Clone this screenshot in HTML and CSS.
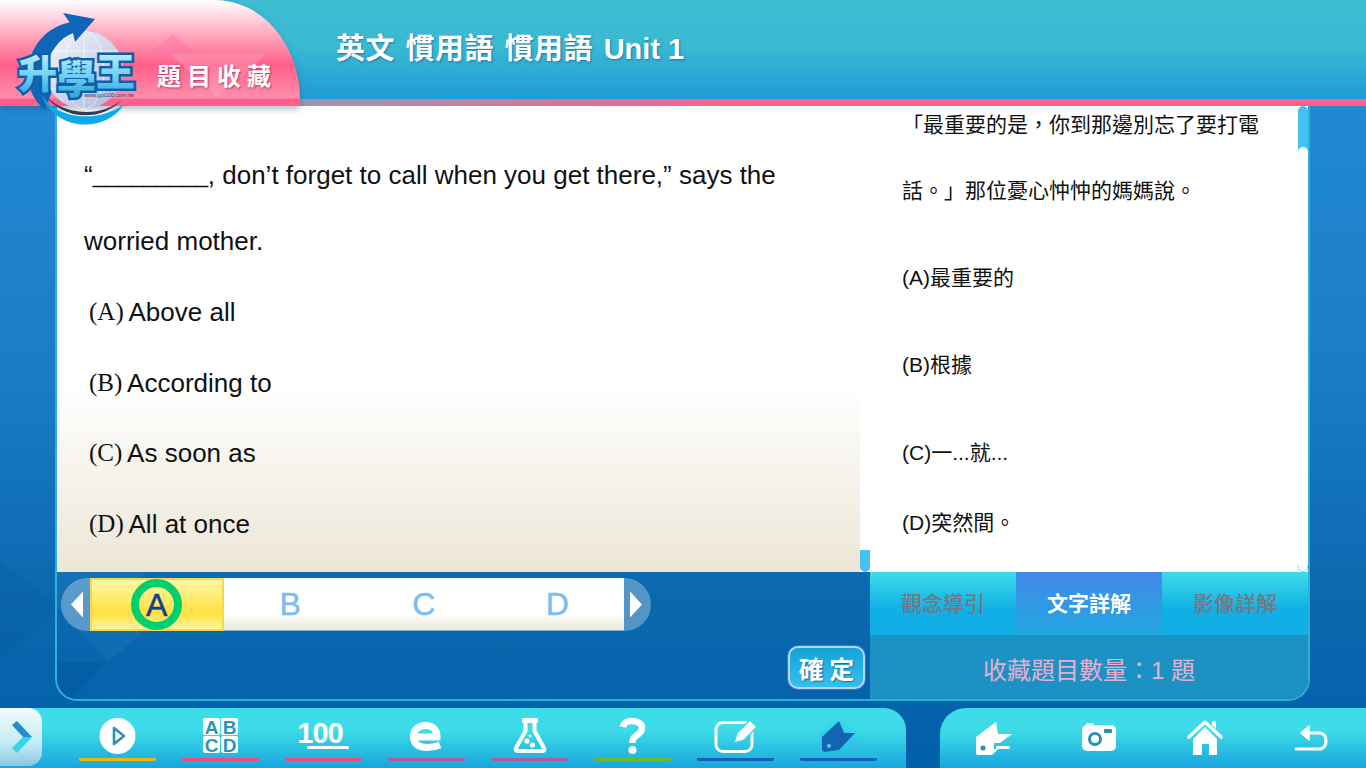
FILE: index.html
```html
<!DOCTYPE html>
<html lang="zh-Hant">
<head>
<meta charset="utf-8">
<title>升學王 題目收藏</title>
<link rel="stylesheet" href="styles.css">
</head>
<body>
<div class="app">
  <header class="top">
    <div class="tab">
      <i class="tab-deco-a"></i><i class="tab-deco-b"></i>
      <span class="tab-label">題目收藏</span>
    </div>
    <h1 class="title">英文 慣用語 慣用語 <span class="title-latin">Unit 1</span></h1>
  </header>

  <div class="logo">
    <svg class="logo-art" viewBox="0 0 140 130" width="140" height="130" role="img" aria-label="升學王">
      <defs>
        <linearGradient id="glb" x1="0" y1="0" x2="1" y2="1"><stop offset="0" stop-color="#f6f8fc"/><stop offset="1" stop-color="#a9b8da"/></linearGradient>
        <linearGradient id="nm" x1="0" y1="0" x2="0" y2="1"><stop offset="0" stop-color="#eafaff"/><stop offset=".55" stop-color="#6fd0f2"/><stop offset="1" stop-color="#1c96d8"/></linearGradient>
      </defs>
      <path d="M72 22C46 26 28 48 28 74 28 90 35 102 45 110L60 70 78 34Z" fill="#0f66b8"/>
      <circle cx="84" cy="70" r="39" fill="url(#glb)"/>
      <g fill="none" stroke="#fff" stroke-width=".7" opacity=".85">
        <ellipse cx="84" cy="70" rx="20" ry="39"/><path d="M45 70h78M50 51h68M50 89h68M84 31v78"/>
      </g>
      <path d="M63 13 95 19 75 42 73 33C60 38 50 50 44 72L33 60C38 42 50 28 70 23Z" fill="#0f66b8"/>
      <path d="M41 94C55 119 98 124 124 104 108 132 56 134 41 94Z" fill="#0fa8e8"/>
      <path d="M43 92C56 113 98 120 122 100 100 123 60 120 43 92Z" fill="#363c52"/>
      <text class="logo-name" fill="url(#nm)" stroke="#0d5fa9" stroke-width="5" paint-order="stroke"><tspan x="18" y="88">升</tspan><tspan x="57" y="93">學</tspan><tspan x="96" y="86">王</tspan></text>
      <text class="logo-url" x="84" y="97">www.got100.com.tw</text>
    </svg>
  </div>

  <main class="stage">
    <section class="panel">
      <div class="content">
        <div class="question">
          <p class="q-text">“<span class="blank">_________</span>, don’t forget to call when you get there,” says the worried mother.</p>
          <p class="opt"><span class="opt-key">(A)</span> Above all</p>
          <p class="opt"><span class="opt-key">(B)</span> According to</p>
          <p class="opt"><span class="opt-key">(C)</span> As soon as</p>
          <p class="opt"><span class="opt-key">(D)</span> All at once</p>
        </div>
        <div class="track-left"><i class="thumb-left"></i></div>
        <div class="explain">
          <div class="explain-text">
            <p class="ex">「最重要的是，你到那邊別忘了要打電話。」那位憂心忡忡的媽媽說。</p>
            <p class="ex gap">(A)最重要的</p>
            <p class="ex gap">(B)根據</p>
            <p class="ex gap-wide">(C)一...就...</p>
            <p class="ex gap-small">(D)突然間。</p>
          </div>
          <div class="track-right"><i class="thumb-right"></i></div>
        </div>
      </div>
      <div class="lower">
        <div class="answers">
          <div class="picker">
            <button class="cap cap-l" type="button"><i class="tri tri-l"></i></button>
            <div class="choices">
              <span class="choice selected"><b class="ring">A</b></span>
              <span class="choice">B</span>
              <span class="choice">C</span>
              <span class="choice">D</span>
            </div>
            <button class="cap cap-r" type="button"><i class="tri tri-r"></i></button>
          </div>
          <button class="confirm" type="button">確 定</button>
        </div>
        <div class="side">
          <nav class="tabs">
            <span class="side-tab">觀念導引</span>
            <span class="side-tab active">文字詳解</span>
            <span class="side-tab">影像詳解</span>
          </nav>
          <div class="count">收藏題目數量：1 題</div>
        </div>
      </div>
    </section>
  </main>

  <footer class="bottom">
    <nav class="bar bar-left">
      <span class="toggle">
        <svg viewBox="0 0 24 34" width="24" height="34" aria-hidden="true"><path d="M3 5 8 1 23 17 14 17Z" fill="#1d8fd6"/><path d="M23 17 8 33 3 28 14 17Z" fill="#38d4e8"/></svg>
      </span>
      <div class="tool tool-yellow">
        <svg viewBox="0 0 77 46" aria-hidden="true"><circle cx="38.500" cy="24" r="18" fill="#fff"/><path d="M35 16 45 24 35 32Z" fill="#fff" stroke="#2a90b8" stroke-width="2.600" stroke-linejoin="round"/></svg>
      </div>
      <div class="tool tool-pink">
        <svg viewBox="0 0 77 46" aria-hidden="true">
          <g fill="#fff"><rect x="21" y="6" width="17" height="17" rx="2"/><rect x="39" y="6" width="17" height="17" rx="2"/><rect x="21" y="24" width="17" height="17" rx="2"/><rect x="39" y="24" width="17" height="17" rx="2"/></g>
          <g class="abcd"><text x="29.500" y="21.500">A</text><text x="47.500" y="21.500">B</text><text x="29.500" y="39.500">C</text><text x="47.500" y="39.500">D</text></g>
        </svg>
      </div>
      <div class="tool tool-pink">
        <svg viewBox="0 0 77 46" aria-hidden="true"><text class="hundred" x="35" y="31">100</text><rect x="22" y="34" width="42" height="3" rx="1.500" fill="#fff"/></svg>
      </div>
      <div class="tool tool-purple">
        <svg viewBox="0 0 77 46" aria-hidden="true"><path d="M27 25H49C49 17 44 13.500 38 13.500 30 13.500 25.500 18 25.500 25 25.500 32 31 35.500 39 35.500 44 35.500 48 34.500 52 33" fill="none" stroke="#fff" stroke-width="7"/></svg>
      </div>
      <div class="tool tool-purple">
        <svg viewBox="0 0 77 46" aria-hidden="true"><rect x="31" y="6" width="16" height="5" rx="1.500" fill="#fff"/><path d="M34.500 10V19L25 36C24 38 25 39 27 39H51C53 39 54 38 53 36L43.500 19V10" fill="none" stroke="#fff" stroke-width="4" stroke-linecap="round" stroke-linejoin="round"/><circle cx="36" cy="29" r="2.600" fill="#fff"/><circle cx="41.500" cy="33" r="2.600" fill="#fff"/><circle cx="39" cy="24" r="1.500" fill="#fff"/></svg>
      </div>
      <div class="tool tool-green">
        <svg viewBox="0 0 77 46" aria-hidden="true"><path d="M29 15C30 10 34 9 38 9 44 9 48 12 48 16 48 20 45 22 42 24 39 26 38.500 27 38.500 31" fill="none" stroke="#fff" stroke-width="6.500"/><circle cx="38.500" cy="38" r="4" fill="#fff"/></svg>
      </div>
      <div class="tool tool-blue">
        <svg viewBox="0 0 77 46" aria-hidden="true"><rect x="19" y="10.500" width="36" height="29" rx="7" fill="none" stroke="#fff" stroke-width="3"/><path d="M37 31 40 21 53 8 60 15 47 28Z" fill="#fff" stroke="#3ad6e6" stroke-width="1.500"/></svg>
      </div>
      <div class="tool tool-blue">
        <svg class="glow" viewBox="0 0 77 46" aria-hidden="true"><path d="M22 25 39 9 44 21H55L39 38 24 40 22 38Z" fill="#1464b4"/><circle cx="29" cy="34" r="2" fill="#3ad6e6"/></svg>
      </div>
    </nav>
    <nav class="bar bar-right">
      <div class="action">
        <svg viewBox="0 0 50 46" aria-hidden="true"><path d="M8 25 28 10 30 22H44L32 31H26V37H30L24 43H10C9 43 8 42 8 41Z" fill="#fff"/><rect x="28" y="34" width="14" height="3" rx="1.500" fill="#fff"/><circle cx="15" cy="36" r="2.500" fill="#2a90b8"/></svg>
      </div>
      <div class="action">
        <svg viewBox="0 0 50 46" aria-hidden="true"><rect x="8" y="13" width="34" height="26" rx="5" fill="#fff"/><rect x="12" y="11" width="8" height="5" rx="1.500" fill="#fff"/><circle cx="21" cy="27" r="5.500" fill="none" stroke="#2a90b8" stroke-width="3"/><rect x="30" y="17" width="8" height="4" rx="1" fill="#2a90b8"/></svg>
      </div>
      <div class="action">
        <svg viewBox="0 0 50 46" aria-hidden="true"><path d="M9 25 25 10 41 25" fill="none" stroke="#fff" stroke-width="3.400" stroke-linecap="round" stroke-linejoin="round"/><path d="M32 13V9H36V17Z" fill="#fff"/><path d="M13 27 25 15 37 27V43H29V32H22V43H13Z" fill="#fff"/></svg>
      </div>
      <div class="action">
        <svg viewBox="0 0 50 46" aria-hidden="true"><path d="M10 37H33C38 37 40 33 40 29 40 25 38 21 33 21H21" fill="none" stroke="#fff" stroke-width="3.200" stroke-linecap="round"/><path d="M23 14 15 21 23 28Z" fill="#fff" stroke="#fff" stroke-width="1.500" stroke-linejoin="round"/></svg>
      </div>
    </nav>
  </footer>
</div>
</body>
</html>
```

FILE: styles.css
```css
* { box-sizing: border-box; }
html, body { margin: 0; padding: 0; }
body { width: 1366px; height: 768px; overflow: hidden; background: #0062aa; }
p, h1 { margin: 0; }
i, b { font-style: normal; }
button { border: 0; padding: 0; font: inherit; cursor: pointer; }

.app {
  position: relative;
  width: 1366px;
  height: 768px;
  overflow: hidden;
  display: flex;
  flex-direction: column;
  font-family: "Liberation Sans", "Noto Sans CJK TC", sans-serif;
  background: linear-gradient(180deg, #2389d4 100px, #1a7cc4 380px, #0a68ae 600px, #0060a8 768px);
}
.app::before {
  content: "";
  position: absolute;
  left: 0;
  top: 560px;
  width: 60px;
  height: 100px;
  background: rgba(10, 80, 150, .14);
  clip-path: polygon(0 0, 60px 50px, 0 100px);
}

/* header */
.top {
  flex: none;
  height: 106px;
  display: flex;
  align-items: flex-start;
  background:
    linear-gradient(90deg, #2fc4d8 0, #9a96b0 300px, #ff5f8a 760px) left bottom / 100% 7px no-repeat,
    linear-gradient(180deg, #3fbdd2 0, #3ab9d3 45px, #1f9bd9 99px) left top / 100% 99px no-repeat;
}
.tab {
  position: relative;
  z-index: 2;
  flex: none;
  width: 300px;
  height: 106px;
  overflow: hidden;
  display: flex;
  align-items: flex-start;
  padding: 58px 0 0 157px;
  border-radius: 0 85px 0 0 / 0 100px 0 0;
  background: linear-gradient(180deg, #fff 0, #ffd3df 18px, #ff9ab4 40px, #ff5f8a 65px, #ff8fac 98px, #ff5f8a 99px, #ff5f8a 106px);
  box-shadow: 0 3px 6px rgba(40, 60, 110, .35);
}
.tab-deco-a {
  position: absolute;
  left: 150px;
  top: 34px;
  width: 46px;
  height: 32px;
  background: rgba(255, 110, 170, .4);
  clip-path: polygon(50% 0, 100% 60%, 0 60%);
}
.tab-deco-b {
  position: absolute;
  left: 170px;
  top: 54px;
  width: 96px;
  height: 44px;
  background: rgba(255, 170, 195, .35);
  clip-path: polygon(0 0, 100% 0, 50% 100%);
}
.tab-label {
  position: relative;
  font-family: "Noto Sans CJK TC", sans-serif;
  font-size: 24px;
  line-height: 34px;
  font-weight: 700;
  letter-spacing: 6px;
  color: #fff;
  text-shadow: 1px 1px 2px rgba(120, 20, 60, .6);
}
.title {
  margin: 30px 0 0 36px;
  font-family: "Liberation Sans", "Noto Sans CJK TC", sans-serif;
  font-size: 29px;
  line-height: 38px;
  font-weight: 700;
  letter-spacing: .5px;
  word-spacing: 2px;
  color: #fff;
  text-shadow: 1px 1px 2px rgba(10, 60, 110, .5);
}
.title-latin { letter-spacing: 0; word-spacing: 0; }

/* logo */
.logo {
  position: absolute;
  z-index: 3;
  left: 0;
  top: 0;
  width: 140px;
  height: 130px;
}
.logo-art { display: block; }
.logo-name {
  font-family: "Noto Sans CJK TC", sans-serif;
  font-size: 39px;
  font-weight: 900;
}
.logo-url { font-size: 5.600px; fill: #2c3f66; }

/* main panel */
.stage { flex: none; height: 595px; padding-left: 55px; }
.panel {
  position: relative;
  width: 1255px;
  height: 595px;
  display: flex;
  flex-direction: column;
  border: 2px solid #2bb2d6;
  border-top: 0;
  border-radius: 0 0 22px 22px;
  overflow: hidden;
}
.content { flex: none; height: 466px; display: flex; }
.question {
  flex: none;
  width: 803px;
  padding: 36px 0 0 27px;
  color: #111;
  font-size: 26px;
  background: linear-gradient(180deg, #fff 0, #fff 280px, #ece6d6 466px);
}
.q-text { width: 730px; line-height: 66px; margin-bottom: 3px; }
.blank { display: inline-block; font-size: 23px; line-height: 1; font-weight: 700; -webkit-text-stroke: .4px #111; }
.opt { height: 70.500px; line-height: 70.500px; padding-left: 5px; }
.opt-key { font-family: "Liberation Serif", serif; font-size: 25px; position: relative; top: -1px; margin-right: -1px; }
.track-left { flex: none; width: 10px; display: flex; align-items: flex-end; background: #fff; }
.thumb-left { display: block; width: 10px; height: 22px; background: #45c0f0; border-radius: 0 0 5px 5px; }
.explain { flex: none; width: 438px; display: flex; overflow: hidden; background: #fff; }
.explain-text {
  flex: none;
  width: 428px;
  height: 466px;
  padding: 0 31px 0 32px;
  margin-top: -14px;
  font-size: 21px;
  color: #111;
}
.ex { line-height: 66px; }
.gap { margin-top: 21px; }
.gap-wide { margin-top: 22px; }
.gap-small { margin-top: 4px; }
.track-right {
  flex: none;
  width: 10px;
  display: flex;
  flex-direction: column;
  justify-content: space-between;
}
.track-right::after {
  content: "";
  display: block;
  height: 6px;
  border: 1px solid #8fd8f0;
  border-top: 0;
  border-radius: 0 0 5px 5px;
}
.thumb-right {
  display: block;
  position: relative;
  overflow: hidden;
  width: 10px;
  height: 46px;
  background: #45c0f0;
  border-radius: 5px 5px 0 0;
}
.thumb-right::after {
  content: "";
  position: absolute;
  left: 0;
  bottom: 0;
  width: 10px;
  height: 5px;
  background: #fff;
  border-radius: 5px 5px 0 0;
}

/* lower area */
.lower { flex: 1; display: flex; }
.answers {
  position: relative;
  flex: none;
  width: 813px;
  display: flex;
  flex-direction: column;
  padding: 6px 0 0 4px;
}
.answers::before {
  content: "";
  position: absolute;
  left: 0;
  top: 0;
  width: 100px;
  height: 128px;
  background: rgba(60, 150, 215, .16);
  clip-path: polygon(0 36px, 51px 90px, 86px 60px, 86px 0, 0 0);
}
.answers::after {
  content: "";
  position: absolute;
  left: 0;
  top: 0;
  width: 100px;
  height: 128px;
  background: rgba(0, 50, 120, .1);
  clip-path: polygon(0 90px, 51px 90px, 13px 128px, 0 128px);
}
.picker { position: relative; z-index: 1; display: flex; width: 590px; height: 54px; }
.cap {
  flex: none;
  width: 29px;
  height: 53px;
  display: flex;
  align-items: center;
  justify-content: center;
  background: rgba(255, 255, 255, .3);
}
.cap-l { border-radius: 27px 0 0 27px; padding-left: 3px; }
.cap-r { width: 27px; border-radius: 0 27px 27px 0; padding-right: 3px; }
.tri { display: block; width: 12px; height: 26px; background: #fff; }
.tri-l { clip-path: polygon(100% 0, 100% 100%, 0 50%); }
.tri-r { clip-path: polygon(0 0, 100% 50%, 0 100%); }
.choices {
  flex: 1;
  height: 53px;
  display: grid;
  grid-template-columns: repeat(4, 1fr);
  grid-template-rows: 52px;
  background: linear-gradient(180deg, #fff 0, #fff 36px, #ece6d6 53px);
  border-bottom: 1px solid #7fb0d8;
}
.choice {
  display: flex;
  align-items: center;
  justify-content: center;
  font-size: 32px;
  line-height: 1;
  color: #7cbcf0;
  -webkit-text-stroke: .5px #7cbcf0;
}
.selected {
  height: 53px;
  border: 2px solid #f5d94a;
  background: linear-gradient(180deg, #fff8a8 0, #ffe040 68%, #fff4a0 100%);
  -webkit-text-stroke: .5px #12408c;
}
.ring {
  width: 51px;
  height: 51px;
  margin: -2px 0;
  flex: none;
  display: flex;
  align-items: center;
  justify-content: center;
  border: 8px solid #00d070;
  border-radius: 50%;
  font-weight: 400;
  color: #12408c;
}
.confirm {
  position: relative;
  z-index: 1;
  align-self: flex-end;
  margin: 14px 5px 0 0;
  width: 77px;
  height: 43px;
  border: 2px solid #b4d8f6;
  border-radius: 10px;
  background: linear-gradient(180deg, #0fa6d6 0, #38bdf0 100%);
  font-family: "Noto Sans CJK TC", sans-serif;
  font-size: 25px;
  line-height: 38px;
  font-weight: 700;
  white-space: nowrap;
  color: #fff;
  text-shadow: 1px 1px 1px rgba(0, 40, 90, .5);
  box-shadow: 0 0 0 1px #3f70c8;
}
.side { flex: none; width: 438px; display: flex; flex-direction: column; }
.tabs { flex: none; height: 63px; display: grid; grid-template-columns: repeat(3, 146px); }
.side-tab {
  display: flex;
  align-items: center;
  justify-content: center;
  padding-bottom: 3px;
  font-family: "Noto Sans CJK TC", sans-serif;
  font-size: 21px;
  font-weight: 500;
  color: #757782;
  background: linear-gradient(180deg, #3edbe8 0, #10b0e6 60%, #10b0e6 100%);
}
.active {
  color: #fff;
  font-weight: 700;
  background: linear-gradient(180deg, #4288ea 0, #22a8e0 100%);
}
.count {
  flex: 1;
  display: flex;
  align-items: center;
  justify-content: center;
  padding-top: 3px;
  font-family: "Liberation Sans", "Noto Sans CJK TC", sans-serif;
  font-size: 24px;
  color: #e8aecf;
  background: #1c92c4;
}

/* bottom bars */
.bottom { flex: none; margin-top: 7px; height: 60px; display: flex; justify-content: space-between; }
.bar { height: 60px; display: flex; background: linear-gradient(180deg, #3edbe8 0, #3edbe8 22px, #18a6dd 60px); }
.bar-left { width: 906px; border-radius: 0 22px 0 0; gap: 26px; }
.bar-right { width: 426px; border-radius: 26px 0 0 0; }
.toggle {
  flex: none;
  width: 42px;
  height: 58px;
  margin-right: 11px;
  display: flex;
  align-items: center;
  justify-content: center;
  border-radius: 0 14px 14px 0;
  background: linear-gradient(180deg, #f2fbfd 0, #c6ecf5 60%, #8cc6e4 100%);
}
.tool { flex: none; width: 77px; height: 53px; padding-top: 4px; border-bottom: 3px solid; border-radius: 0 0 2px 2px; }
.tool svg, .action svg { display: block; }
.tool svg { width: 77px; height: 46px; }
.tool .glow { filter: drop-shadow(0 0 4px #22c8ee); }
.tool-yellow { border-color: #f2b705; }
.tool-pink { border-color: #ee4a7e; }
.tool-purple { border-color: #b05aa0; }
.tool-green { border-color: #6cbb2c; }
.tool-blue { border-color: #1462b6; }
.abcd text { font-family: "Liberation Sans", sans-serif; font-size: 19px; font-weight: 700; text-anchor: middle; fill: #2a96b4; }
.hundred { font-family: "Liberation Sans", sans-serif; font-size: 29px; font-weight: 700; text-anchor: middle; letter-spacing: -1px; fill: #fff; }
.action { flex: none; width: 106px; padding-top: 4px; display: flex; justify-content: center; }
.action svg { width: 50px; height: 46px; }
```
